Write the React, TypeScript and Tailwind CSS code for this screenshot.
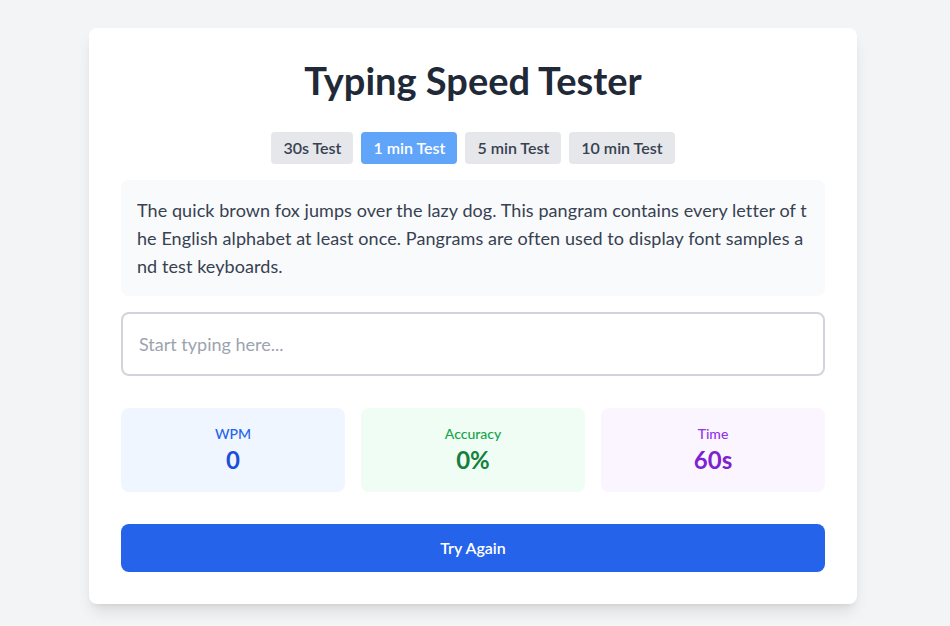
import { useState } from 'react';

const SAMPLE =
    'The quick brown fox jumps over the lazy dog. This pangram contains every letter of the English alphabet at least once. Pangrams are often used to display font samples and test keyboards.';

const DURATIONS = [
    { label: '30s Test', seconds: 30 },
    { label: '1 min Test', seconds: 60 },
    { label: '5 min Test', seconds: 300 },
    { label: '10 min Test', seconds: 600 },
];

export default function App() {
    const [duration, setDuration] = useState(60);
    const [input, setInput] = useState('');

    return (
        <div className="min-h-screen bg-[#f3f4f6] py-7 pr-1 font-['Lato',sans-serif]">
            <div className="max-w-3xl mx-auto bg-white rounded-lg shadow-lg p-8">
                {/* Header */}
                <h1 className="text-[38px] leading-10 font-bold text-center text-[#1f2937] mb-8">Typing Speed Tester</h1>

                {/* Duration picker */}
                <div className="flex justify-center gap-2 mb-4">
                    {DURATIONS.map((d) => (
                        <button
                            key={d.seconds}
                            onClick={() => setDuration(d.seconds)}
                            className={`px-3 py-1 rounded text-base font-semibold ${duration === d.seconds
                                    ? 'bg-[#60a5fa] text-white'
                                    : 'bg-[#e5e7eb] text-[#374151]'
                                }`}
                        >
                            {d.label}
                        </button>
                    ))}
                </div>

                {/* Sample text */}
                <div className="bg-[#f9fafb] rounded-lg p-4 mb-4 text-lg tracking-[0.08px] text-[#374151] break-all">
                    {SAMPLE}
                </div>

                {/* Input */}
                <input
                    value={input}
                    onChange={(e) => setInput(e.target.value)}
                    placeholder="Start typing here..."
                    className="w-full p-4 text-lg border-2 border-[#d1d5db] rounded-lg mb-8 outline-none placeholder:text-[#9ca3af]"
                />

                {/* Stats */}
                <div className="grid grid-cols-3 gap-4 mb-8">
                    <div className="bg-[#eff6ff] rounded-lg p-4 text-center">
                        <div className="text-sm font-medium text-[#2563eb]">WPM</div>
                        <div className="text-2xl font-bold text-[#1d4ed8]">0</div>
                    </div>
                    <div className="bg-[#f0fdf4] rounded-lg p-4 text-center">
                        <div className="text-sm font-medium text-[#16a34a]">Accuracy</div>
                        <div className="text-2xl font-bold text-[#15803d]">0%</div>
                    </div>
                    <div className="bg-[#faf5ff] rounded-lg p-4 text-center">
                        <div className="text-sm font-medium text-[#9333ea]">Time</div>
                        <div className="text-2xl font-bold text-[#7e22ce]">{duration}s</div>
                    </div>
                </div>

                <button className="w-full py-3 bg-[#2563eb] text-white font-semibold rounded-lg">Try Again</button>
            </div>
        </div>
    );
}
